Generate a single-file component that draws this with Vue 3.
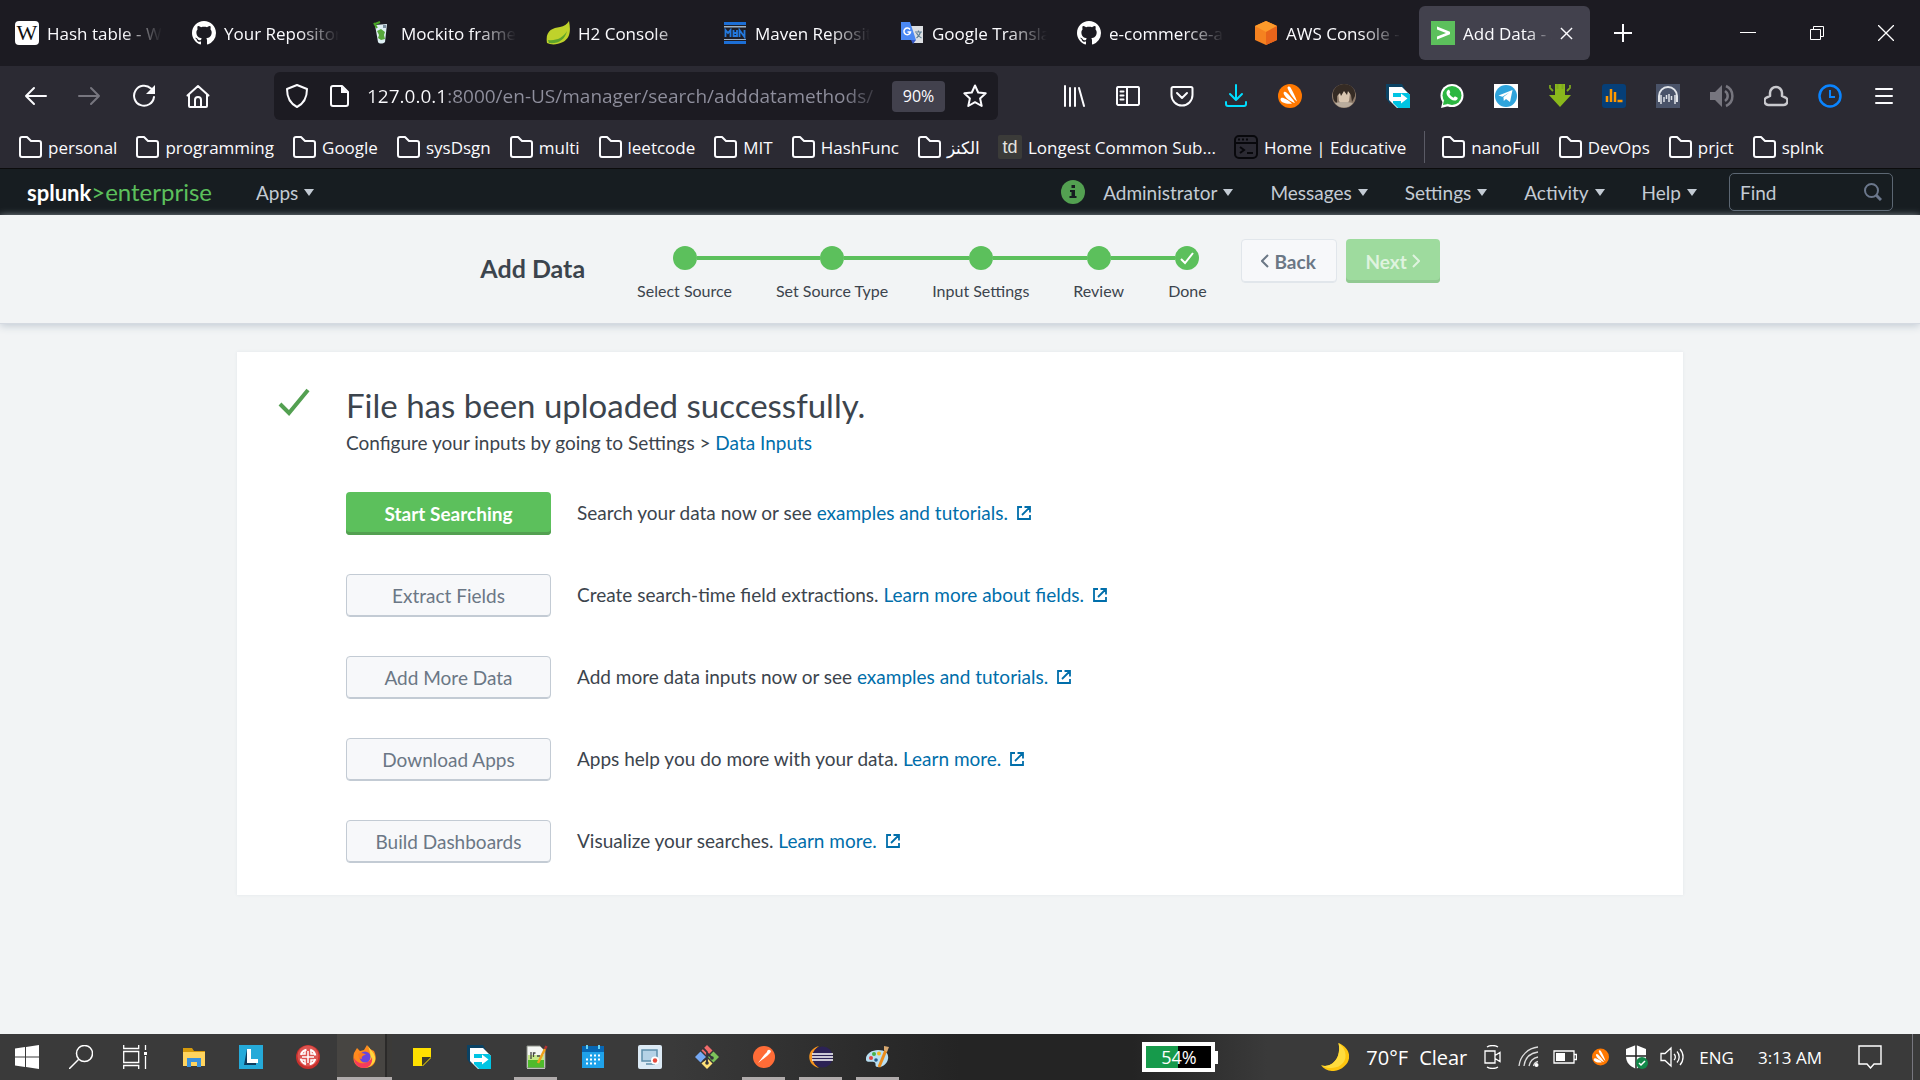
<script setup>
import { ref } from 'vue'

const github = '<path transform="scale(1.5)" fill="#fff" d="M8 0C3.58 0 0 3.58 0 8c0 3.54 2.29 6.53 5.47 7.59.4.07.55-.17.55-.38 0-.19-.01-.82-.01-1.49-2.01.37-2.53-.49-2.69-.94-.09-.23-.48-.94-.82-1.13-.28-.15-.68-.52-.01-.53.63-.01 1.08.58 1.23.82.72 1.21 1.87.87 2.33.66.07-.52.28-.87.51-1.07-1.78-.2-3.64-.89-3.64-3.95 0-.87.31-1.59.82-2.15-.08-.2-.36-1.02.08-2.12 0 0 .67-.21 2.2.82.64-.18 1.32-.27 2-.27s1.36.09 2 .27c1.53-1.04 2.2-.82 2.2-.82.44 1.1.16 1.92.08 2.12.51.56.82 1.27.82 2.15 0 3.07-1.87 3.75-3.65 3.95.29.25.54.73.54 1.48 0 1.07-.01 1.93-.01 2.2 0 .21.15.46.55.38A8.01 8.01 0 0016 8c0-4.42-3.58-8-8-8z"/>'
const line = (d, c = '#fbfbfe', w = 2) => `<path d="${d}" fill="none" stroke="${c}" stroke-width="${w}" stroke-linecap="round" stroke-linejoin="round"/>`
const avast = '<circle cx="12" cy="12" r="12" fill="#ff7800"/><path d="M9.500 4c0-1.500 2-2 3-.5 2 3.500 5 9 6.500 14-3-2-8-9-9.500-13.500z M5.500 9c.3-1.500 2-1.500 3-.5 3 3 6.500 6.500 8.500 10.500-4-1-11-6-11.500-10z M2.500 15c.5-1.500 2-1.500 3.500-.8 3 1.300 6 3 8 5.300-4 1-12-.5-11.500-4.500z" fill="#fff"/>'
const transfer = '<path d="M0 0h16l3 5H4v15L0 14z" fill="#0b4263"/><path d="M3 3h13l8 8v13H11l-8-8z" fill="#fff"/><path d="M7 9h15l2 2v13H12l-5-5z" fill="#00c4e3"/><path d="M7 13h8V9.500l6.500 5-6.500 5V17H7z" fill="#fff"/>'

const icons = {
  wiki: '<rect width="24" height="24" rx="4" fill="#fff"/><text x="12" y="19" text-anchor="middle" font-family="Liberation Serif, serif" font-size="22" fill="#111">W</text>',
  github,
  mockito: '<path d="M6 4l12-1-2 18c-2 2-6 2-7 0z" fill="#dff0f4"/><path d="M8 10l4-2 4 3-1 3 1 4-4 1-3-2 1-3z" fill="#57a83b"/><path d="M6 3l5-2M5 2l3 5" stroke="#49a527" stroke-width="2"/><path d="M14 4h3v3h-3z" fill="#7b8f9e"/>',
  leaf: '<path d="M23 0c2 10 1 17-6 21-6 3-12 3-16 1C-1 10 6 7 14 6c4-.5 7-3 9-6z" fill="#bfd22b"/><path d="M2 19c8 1 15-2 19-9-2 9-9 13-18 12z" fill="#5da32b"/>',
  maven: '<path d="M1 1h22v22H1z" fill="#1f1e26"/><path d="M1 1h22v3H1zM1 20h22v3H1z" fill="#1c6fd6"/><path d="M1 5h22v1.500H1zM1 18h22v1H1z" fill="#9fb2c4"/><path d="M2.500 16V9l2.500 3 2.500-3v7M10.500 9v6h3.500V9M10.500 12h4M16.500 16V9l5 7V9" fill="none" stroke="#2379dd" stroke-width="1.800"/>',
  translate: '<path d="M9 5h14v17H14z" fill="#dcdfe3"/><path d="M1 1h9l6 18H1z" fill="#4a88f3"/><path d="M11 19h5l-3 4z" fill="#3658c7"/><path d="M10 8.500A3.300 3.300 0 1 0 10.500 11H7.500" fill="none" stroke="#fff" stroke-width="1.500"/><path d="M15 11h7M18.500 9.500V11M20.500 11c-1 4-3 5-4 6M16.500 12c1 2 3 4 5 5" fill="none" stroke="#5c7f95" stroke-width="1.200"/>',
  aws: '<path d="M12 0l11 5v14l-11 5L1 19V5z" fill="#f58220"/><path d="M12 0l11 5-11 6L1 5z" fill="#fc9a2b"/><path d="M12 11l11-6v14l-11 5z" fill="#e8641b"/>',
  splunk: '<rect width="24" height="24" fill="#5cc05c"/><path d="M6 5.500l13 5.300v2.400L6 18.500v-3L15 12 6 8.500z" fill="#fff"/>',
  back: line('M22 12H2M10 4L2 12l8 8'),
  forward: line('M1 12h20M13 4l8 8-8 8', '#77767f'),
  reload: line('M22 13a10 10 0 1 1-3-8.500') + '<path d="M23 1v9h-9z" fill="#fbfbfe"/>',
  home: line('M1.500 11.500L12 2l10.500 9.500M3 10.500V22a1 1 0 0 0 1 1h16a1 1 0 0 0 1-1V10.500M9 22v-6a3 3 0 0 1 6 0v6'),
  shield: line('M12 1l10 4c0 10-4 15-10 18C6 20 2 15 2 5z'),
  page: line('M6 2h9l6 6v12a2 2 0 0 1-2 2H6a2 2 0 0 1-2-2V4a2 2 0 0 1 2-2z') + '<path d="M14 2v7h7z" fill="#fbfbfe"/>',
  star: line('M12 1.500l3.200 7 7.500.8-5.600 5.100 1.600 7.600-6.700-3.800L5.300 22l1.600-7.600L1.300 9.300l7.500-.8z'),
  library: line('M3 2v20M8 4v18M13 4v18M17 4l5 18'),
  sidebar: line('M2 3h20a1.500 1.500 0 0 1 1 1v16a1.500 1.500 0 0 1-1 1H2a1.500 1.500 0 0 1-1-1V4a1.500 1.500 0 0 1 1-1zM11 3v18M4.500 7.500h3M4.500 11.500h3M4.500 15.500h3'),
  pocket: line('M3 3h18a1.500 1.500 0 0 1 1.500 1.500V11a10.500 10.500 0 0 1-21 0V4.500A1.500 1.500 0 0 1 3 3zM7 9l5 5 5-5'),
  download: line('M12 1v15M6 10l6 6 6-6M2 18v2a2 2 0 0 0 2 2h16a2 2 0 0 0 2-2v-2', '#00ddff'),
  avast,
  avatar: '<circle cx="12" cy="12" r="12" fill="#8d7a6a"/><path d="M6 8c3-3 9-3 12 1l-1 8c-2 4-8 4-10 0z" fill="#d9c6b1"/><path d="M1 12C0 4 7 0 12 0c7 0 12 5 11 12l-3 6-1-7-3-4-1 4-3-4-3 5-1-3-3 3v7C3 18 1 16 1 12z" fill="#352b24"/><path d="M3 19c4 6 14 6 18 0l-6-1H9z" fill="#b9ac9d"/>',
  transfer,
  whatsapp: '<circle cx="12" cy="11.500" r="11.500" fill="#fff"/><path d="M1 24l2-8 6 6z" fill="#fff"/><circle cx="12" cy="11.500" r="9.500" fill="#2bb741"/><path d="M3 21l1-5 4 4z" fill="#2bb741"/><path d="M8 6c1-.5 1.500 0 2 1.500.6 1.300 0 1.500-.5 2.500 1 2 2.500 3 4 3.700 1-1.200 1.200-1.500 2-1.200l2.200 1.200c.3 2-1.700 3-3.500 2.800C10 16 6.500 11.500 6.500 9c0-1.500.7-2.500 1.500-3z" fill="#fff"/>',
  telegram: '<rect width="24" height="24" fill="#fff"/><circle cx="12" cy="12" r="11" fill="#2fa4dc"/><path d="M4.500 11.500L18.500 6l-2.500 12-4-3-2.200 2-.4-4 6-4.500-7 4.300z" fill="#fff"/>',
  arrow: '<path d="M7 0h10v11h6L12 23 1 11h6z" fill="#8ab81c"/><path d="M2 1v3l3 3M22 1v3l-3 3M9.500 0v5M14.500 0v5" fill="none" stroke="#7da620" stroke-width="1.800"/>',
  chart: '<rect width="24" height="24" rx="3" fill="#063f78"/><path d="M5 18V12M9 18V5M13 18V8M15.500 17h5" stroke="#ff9800" stroke-width="2.500"/>',
  headset: '<rect width="24" height="24" fill="#4a5369"/><path d="M3 18v-6a9 9 0 0 1 18 0v6" fill="none" stroke="#e2e5ea" stroke-width="2"/><path d="M5 11v9M8 13v5M10.500 11v4M13 10v8M15.500 12v4M19 11v9" stroke="#dfe2e8" stroke-width="1.500"/>',
  sound: '<path d="M0 8h5l7-7v22l-7-7H0z" fill="#77767f"/><path d="M15 7a6 6 0 0 1 0 10M16 2a11 11 0 0 1 0 20" fill="none" stroke="#77767f" stroke-width="2.500"/>',
  drive: line('M5 21h14a4 4 0 0 0 1-8l-2-1V9a6 6 0 0 0-12 0v3l-2 1a4 4 0 0 0 1 8z', '#c9c9ce', 2.5),
  clock: '<circle cx="12" cy="12" r="10.500" fill="none" stroke="#0a84ff" stroke-width="2.500"/><path d="M12 6v7h5" fill="none" stroke="#0a84ff" stroke-width="2"/>',
  menu: line('M4 5h16M4 12h16M4 19h16'),
  folder: line('M2 20V4a2 2 0 0 1 2-2h5l4 4h8a2 2 0 0 1 2 2v12a2 2 0 0 1-2 2H4a2 2 0 0 1-2-2z'),
  td: '<rect width="24" height="24" rx="2" fill="#3b3b39"/><text x="12" y="18" text-anchor="middle" font-family="Liberation Sans, sans-serif" font-size="18" fill="#e4e4e0">td</text>',
  terminal: '<rect x="1" y="1" width="22" height="22" rx="4" fill="none" stroke="#08080c" stroke-width="2"/><path d="M1 8h22M4 4.500h2M8 4.500h2M12 4.500h2M6 12l4 3-4 3M13 18h6" stroke="#08080c" stroke-width="2" fill="none"/>',
  explorer: '<path d="M1 3h9l2 3h11v15H1z" fill="#d69a0c"/><path d="M1 7h22v14H1z" fill="#ffd45e"/><path d="M5 13h14v9h-4v-5H9v5H5z" fill="#3a91dc"/>',
  letter: '<rect width="24" height="24" fill="#25aad9"/><path d="M8 4L5 20h12V15h-5z" fill="#0d3c5e"/><path d="M8 4h4v10h7v4H8z" fill="#fff"/>',
  redball: '<circle cx="12" cy="12" r="12" fill="#c9302c"/><circle cx="12" cy="11" r="10.500" fill="#dd5450"/><circle cx="12" cy="12" r="7.500" fill="none" stroke="#fff" stroke-width="2" stroke-dasharray="8 3.780" stroke-dashoffset="-2"/><path d="M12 6v12M6 12h12M9 6v3H6M15 6v3h3M9 18v-3H6M15 18v-3h3" fill="none" stroke="#fff" stroke-width="1.500"/>',
  firefox: '<path d="M1 8l3-5 3 3 4-1 3-5 3 4 4 2c4 8 1 17-9 17S-1 16 1 8z" fill="#ff8a1d"/><path d="M15 1l3 4c3 3 5 7 4 11-3 5-6 6-9 6 6-6 5-13 2-21z" fill="#ffd53d"/><path d="M1 13c2 4 6 6 11 5 4-1 6-3 7-6 1 7-3 11-8 11-6 0-10-4-10-10z" fill="#f53b5c"/><circle cx="12" cy="12" r="5.500" fill="#6a45dd"/><path d="M5 9c3-2 6-1 8 1-3 0-5 2-4 4-2 0-4-2-4-5z" fill="#ff7a1f"/>',
  sticky: '<path d="M3 3h18v10l-8 8H3z" fill="#ffe000"/><path d="M12 21v-9h9z" fill="#3a3a2c"/>',
  notepad: '<path d="M3 1h13l5 5v18H3z" fill="#f4f6f3"/><path d="M4 10h16v6H4z" fill="#c5e989"/><path d="M4 15h16v8H4z" fill="#4fbb2b"/><path d="M3 1h13l5 5v17H3z" fill="none" stroke="#8a8f86"/><path d="M7 14V7M9.500 12V8h2M13 11h3" fill="none" stroke="#444" stroke-width="1.300"/><path d="M21 4l-7 14" stroke="#f0a11c" stroke-width="2.500"/><path d="M22.500 1l-1.500 3" stroke="#b23232" stroke-width="2.500"/>',
  calendar: '<rect x="1" y="1" width="22" height="22" fill="#1fa2ea"/><path d="M1 1h22v6H1z" fill="#0767b4"/><path d="M6 0v4M18 0v4" stroke="#66d1f3" stroke-width="2"/><path d="M9 10.500h11M5 14.500h15M5 18.500h11" stroke="#fff" stroke-width="2" stroke-dasharray="2 2"/>',
  recorder: '<rect width="24" height="24" rx="2" fill="#dceaf5"/><path d="M4 5h15v11H4zM8 19h9" fill="#b5d2e6" stroke="#5e8fab" stroke-width="1.500"/><circle cx="17" cy="15.500" r="4" fill="#fff"/><circle cx="17" cy="15.500" r="2.200" fill="#e64b3c"/>',
  git: '<path d="M12 0l5.500 5.500L12 11 6.500 5.500z" fill="#f16b6b"/><path d="M18.500 6.500L24 12l-5.500 5.500L13 12z" fill="#7cc35a"/><path d="M12 13l5.500 5.500L12 24l-5.500-5.500z" fill="#ffe278"/><path d="M5.500 6.500L11 12l-5.500 5.500L0 12z" fill="#75a8f3"/><path d="M8 3l4 4v11M12 8l5 5M12 13l-4 3" stroke="#33333b" stroke-width="1.800" fill="none"/><circle cx="12" cy="18" r="1.800" fill="#33333b"/><circle cx="17" cy="13" r="1.800" fill="#33333b"/>',
  postman: '<circle cx="12" cy="12" r="11" fill="#ff6c37"/><path d="M6 18l7-9 2 2zM13 9l3-3 2 2-3 3z" fill="#fff"/><circle cx="17" cy="6.500" r="1.800" fill="#fff"/>',
  eclipse: '<path d="M10 1C-3 4-3 20 10 23 2 18 2 6 10 1z" fill="#f7941e"/><circle cx="13.500" cy="12" r="10.500" fill="#2c2255"/><path d="M3 9h21M3 12h21M3 15h21" stroke="#fff" stroke-width="1.500"/>',
  paint: '<path d="M12 5c8 0 11 4 10 9s-6 9-11 8c-3-1 0-4-3-5s-7 1-8-2C-1 10 5 5 12 5z" fill="#b9dff2"/><circle cx="5" cy="13" r="2" fill="#e04545"/><circle cx="8" cy="9" r="2" fill="#47b04b"/><circle cx="13" cy="8.500" r="2" fill="#f4b91f"/><circle cx="10" cy="15" r="1.800" fill="#225c8c"/><path d="M20 5l-7 17" stroke="#ea8c1c" stroke-width="3"/><path d="M18 1l5 1-2 5-3-2z" fill="#d8a870"/>',
  windows: '<path d="M0 3.400L10 2v9.500H0zM11 1.900L24 0v11.500H11zM0 12.500h10V22L0 20.600zM11 12.500h13V24l-13-1.900z" fill="#fff"/>',
  search: '<circle cx="15.500" cy="8.500" r="8" fill="none" stroke="#fff" stroke-width="1.500"/><path d="M9.500 14.500L0 24" stroke="#fff" stroke-width="1.500"/>',
  taskview: '<path d="M.7 0v3.500h15V0M.7 24v-3.500h15V24M.7 6.500h15v11H.7zM22.500 0v5M22.500 11v13" fill="none" stroke="#fff" stroke-width="1.300"/><path d="M21 7h3v3h-3z" fill="#fff"/>',
  meet: '<path d="M4 6h10v12H4zM14 10.500l5-3v9l-5-3M6 2c3-2 8-2 11 0M6 22c3 2 8 2 11 0" fill="none" stroke="#fff" stroke-width="1.300"/>',
  wifi: '<path d="M2 21C3 11 11 3 21 2M7 21C8 13 13 8 21 7M12 21c1-5 4-8 9-9M16.500 21c.5-2.500 2-4 4.500-4.500" fill="none" stroke="#ddd" stroke-width="1.300"/><circle cx="19.500" cy="20" r="2" fill="#fff"/>',
  battery: '<path d="M1 6h20v12H1zM21 9.500h2.500v5H21" fill="none" stroke="#fff" stroke-width="1.300"/><path d="M3 8h9v8H3z" fill="#fff"/>',
  defender: '<path d="M12 0l10 4v7c0 7-4 10-10 13C6 21 2 18 2 11V4z" fill="#fff"/><path d="M12 0v24M2 11h20" stroke="#222" stroke-width="1.500"/><circle cx="18" cy="18" r="6" fill="#12894a"/><path d="M15 18l2 2 4-4" fill="none" stroke="#fff" stroke-width="1.500"/>',
  volume: '<path d="M1 8.500h4l6-5.500v18l-6-5.500H1zM14 9a4 4 0 0 1 0 6M17 6.500a8 8 0 0 1 0 11M20 4a12 12 0 0 1 0 16" fill="none" stroke="#fff" stroke-width="1.300"/>',
  notice: '<path d="M1 1h22v18h-7l-3.500 4L9 19H1z" fill="none" stroke="#fff" stroke-width="1.400"/>',
  moon: '<path d="M15 0c10 4 12 14 5 20-6 6-16 5-20-1 8 3 18-5 15-19z" fill="#fdc50f"/><path d="M15 0c6 4 8 12 4 17-4 5-12 6-19 2 8 3 18-5 15-19z" fill="#ffdc3e"/>',
}

const tabs = [
  ['wiki', 'Hash table - Wikipedia'], ['github', 'Your Repositories'], ['mockito', 'Mockito framework'],
  ['leaf', 'H2 Console'], ['maven', 'Maven Repository'], ['translate', 'Google Translate'],
  ['github', 'e-commerce-app'], ['aws', 'AWS Console - Signup'], ['splunk', 'Add Data - Splunk'],
]
const extensions = ['library', 'sidebar', 'pocket', 'download', 'avast', 'avatar', 'transfer', 'whatsapp', 'telegram', 'arrow', 'chart', 'headset', 'sound', 'drive', 'clock', 'menu']
const bookmarks = [
  ['folder', 'personal'], ['folder', 'programming'], ['folder', 'Google'], ['folder', 'sysDsgn'], ['folder', 'multi'],
  ['folder', 'leetcode'], ['folder', 'MIT'], ['folder', 'HashFunc'], ['folder', 'الكنز'],
  ['td', 'Longest Common Sub...'], ['terminal', 'Home | Educative'],
]
const moreBookmarks = ['nanoFull', 'DevOps', 'prjct', 'splnk']
const menus = ['Administrator', 'Messages', 'Settings', 'Activity', 'Help']
const steps = ['Select Source', 'Set Source Type', 'Input Settings', 'Review', 'Done']
const actions = [
  ['Start Searching', 'Search your data now or see', 'examples and tutorials.'],
  ['Extract Fields', 'Create search-time field extractions.', 'Learn more about fields.'],
  ['Add More Data', 'Add more data inputs now or see', 'examples and tutorials.'],
  ['Download Apps', 'Apps help you do more with your data.', 'Learn more.'],
  ['Build Dashboards', 'Visualize your searches.', 'Learn more.'],
]
const apps = [
  ['explorer', ''], ['letter', ''], ['redball', ''], ['firefox', 'current'], ['sticky', ''], ['transfer', ''], ['notepad', 'open'],
  ['calendar', ''], ['recorder', ''], ['git', ''], ['postman', 'open'], ['eclipse', 'open'], ['paint', 'open'],
]
const tray = ['meet', 'wifi', 'battery', 'avast', 'defender', 'volume']
const url = ref('127.0.0.1:8000/en-US/manager/search/adddatamethods/')
const find = ref('')
</script>

<template>
  <div class="screen">
    <header class="browser">
      <div class="tabstrip">
        <div v-for="([icon, title], i) in tabs" :key="title" class="tab" :class="{ active: i === 8 }">
          <svg class="icon" viewBox="0 0 24 24" v-html="icons[icon]" />
          <span class="tab-title">{{ title }}</span>
          <button v-if="i === 8" class="tab-close" aria-label="Close tab">
            <svg viewBox="0 0 14 14"><path d="M1 1l12 12M13 1L1 13" stroke="#fbfbfe" stroke-width="1.500" /></svg>
          </button>
        </div>
        <button class="new-tab" aria-label="New tab">
          <svg viewBox="0 0 18 18"><path d="M9 0v18M0 9h18" stroke="#fbfbfe" stroke-width="2" /></svg>
        </button>
        <div class="window-controls">
          <button aria-label="Minimize"><svg viewBox="0 0 16 16"><path d="M0 7.500h16" stroke="#fff" /></svg></button>
          <button aria-label="Restore"><svg viewBox="0 0 16 16"><path d="M1.500 4.500h10v10h-10zM4.500 4.500v-3h10v10h-3" fill="none" stroke="#fff" /></svg></button>
          <button aria-label="Close"><svg viewBox="0 0 16 16"><path d="M0 0l16 16M16 0L0 16" stroke="#fff" stroke-width="1.300" /></svg></button>
        </div>
      </div>

      <div class="toolbar">
        <button v-for="name in ['back', 'forward', 'reload', 'home']" :key="name" class="tool" :aria-label="name">
          <svg class="icon" viewBox="0 0 24 24" v-html="icons[name]" />
        </button>
        <div class="urlbar">
          <svg class="icon" viewBox="0 0 24 24" v-html="icons.shield" />
          <svg class="icon" viewBox="0 0 24 24" v-html="icons.page" />
          <input v-model="url" class="url" aria-label="Address" />
          <button class="zoom">90%</button>
          <svg class="icon" viewBox="0 0 24 24" v-html="icons.star" />
        </div>
        <button v-for="name in extensions" :key="name" class="tool" :aria-label="name">
          <svg class="icon" viewBox="0 0 24 24" v-html="icons[name]" />
        </button>
      </div>

      <nav class="bookmarks">
        <a v-for="[icon, label] in bookmarks" :key="label" href="#" :class="icon">
          <svg class="icon" viewBox="0 0 24 24" v-html="icons[icon]" />{{ label }}
        </a>
        <i class="divider" />
        <a v-for="label in moreBookmarks" :key="label" href="#" class="folder">
          <svg class="icon" viewBox="0 0 24 24" v-html="icons.folder" />{{ label }}
        </a>
      </nav>
    </header>

    <nav class="splunkbar">
      <a class="logo" href="#"><b>splunk</b><span>&gt;enterprise</span></a>
      <button class="menu">Apps<i class="caret" /></button>
      <svg class="info" viewBox="0 0 24 24"><circle cx="12" cy="12" r="12" fill="#53a051" /><path d="M10.500 5h3.500v3h-3.500zM9 10h5v6h1.500v2H8.500v-2H10.500v-4H9z" fill="#171d21" /></svg>
      <button v-for="name in menus" :key="name" class="menu">{{ name }}<i class="caret" /></button>
      <label class="find">
        <input v-model="find" placeholder="Find" aria-label="Find" />
        <svg viewBox="0 0 18 18"><circle cx="7.500" cy="7.500" r="6.500" fill="none" stroke="#6b778c" stroke-width="2" /><path d="M12 12l5 5" stroke="#6b778c" stroke-width="3" /></svg>
      </label>
    </nav>

    <section class="wizard">
      <h1>Add Data</h1>
      <ol class="steps">
        <li v-for="(step, i) in steps" :key="step">
          <div class="track">
            <i class="bar" :class="{ hidden: i === 0 }" />
            <span class="dot"><svg v-if="i === 4" viewBox="0 0 14 14"><path d="M1 8l4 4 8-10" fill="none" stroke="#fff" stroke-width="2" /></svg></span>
            <i class="bar" :class="{ hidden: i === 4 }" />
          </div>
          <span class="step-label">{{ step }}</span>
        </li>
      </ol>
      <div class="wizard-buttons">
        <button class="back"><svg viewBox="0 0 8 14"><path d="M7 1L1 7l6 6" fill="none" stroke="currentColor" stroke-width="2" /></svg>Back</button>
        <button class="next" disabled>Next<svg viewBox="0 0 8 14"><path d="M1 1l6 6-6 6" fill="none" stroke="currentColor" stroke-width="2" /></svg></button>
      </div>
    </section>

    <main class="content">
      <div class="card">
        <svg class="check" viewBox="0 0 32 28"><path d="M2 16l9 9L30 2" fill="none" stroke="#53a051" stroke-width="4" /></svg>
        <div class="card-body">
          <h2>File has been uploaded successfully.</h2>
          <p class="hint">Configure your inputs by going to Settings &gt; <a href="#">Data Inputs</a></p>
          <div v-for="([label, text, link], i) in actions" :key="label" class="action">
            <button :class="{ primary: i === 0 }">{{ label }}</button>
            <p>
              {{ text }} <a href="#">{{ link }}<svg class="external" viewBox="0 0 14 14"><path d="M5 1H1v12h12V9M7.500 1H13v5.500M13 1L5 9" fill="none" stroke="#006eaa" stroke-width="1.800" /></svg></a>
            </p>
          </div>
        </div>
      </div>
    </main>

    <footer class="taskbar">
      <button v-for="name in ['windows', 'search', 'taskview']" :key="name" class="system" :aria-label="name">
        <svg class="icon" viewBox="0 0 24 24" v-html="icons[name]" />
      </button>
      <div class="apps">
        <button v-for="[name, state] in apps" :key="name" class="app" :class="state" :aria-label="name">
          <svg class="icon" viewBox="0 0 24 24" v-html="icons[name]" />
        </button>
      </div>
      <div class="charge">54%</div>
      <div class="weather"><svg viewBox="0 0 24 24" v-html="icons.moon" /><span>70°F</span><span>Clear</span></div>
      <div class="tray">
        <svg v-for="name in tray" :key="name" :class="name" viewBox="0 0 24 24" v-html="icons[name]" />
      </div>
      <span class="lang">ENG</span>
      <time>3:13 AM</time>
      <button class="notice" aria-label="Notifications"><svg class="icon" viewBox="0 0 24 24" v-html="icons.notice" /></button>
    </footer>
  </div>
</template>

<style>
body { margin: 0; }
</style>

<style scoped>
* { box-sizing: border-box; }
button { padding: 0; border: 0; background: none; font: inherit; color: inherit; }
svg { display: block; flex: none; }
.icon { width: 24px; height: 24px; }
.screen { display: flex; flex-direction: column; min-height: 100vh; background: #f2f4f5; font-family: Lato, sans-serif; font-size: 19px; color: #3c444d; }

.browser { background: #2b2a33; border-bottom: 1px solid #0c0c0d; font-family: "Open Sans", sans-serif; font-size: 17px; color: #fbfbfe; }
.tabstrip { display: flex; align-items: center; gap: 6px; height: 66px; padding-left: 3px; background: #1c1b22; }
.tab { display: flex; align-items: center; gap: 8px; flex: 0 1 171px; min-width: 0; height: 54px; padding: 0 12px; border-radius: 6px; }
.tab.active { background: #42414d; }
.tab-title { flex: 1; overflow: hidden; white-space: nowrap; mask-image: linear-gradient(to left, transparent, #000 40px); }
.active .tab-title { mask-image: linear-gradient(to left, transparent, #000 24px); }
.tab-close { padding: 5px 5px 5px 0; }
.tab-close svg { width: 13px; height: 13px; }
.new-tab { padding: 14px 18px; }
.new-tab svg { width: 18px; height: 18px; }
.window-controls { display: flex; margin-left: auto; }
.window-controls button { display: grid; place-items: center; width: 69px; height: 44px; }
.window-controls svg { width: 16px; height: 16px; }
.toolbar { display: flex; align-items: center; height: 60px; padding: 0 9px; }
.tool { display: grid; place-items: center; width: 54px; height: 48px; }
.urlbar { display: flex; align-items: center; flex: 1; min-width: 0; height: 48px; margin: 0 49px; padding: 0 11px; border-radius: 6px; background: #1c1b22; }
.urlbar .icon + .icon { margin-left: 18px; }
.url { flex: 1; min-width: 0; height: 40px; margin: 0 8px 0 16px; padding: 0; border: 0; outline: 0; font: inherit; font-size: 19px; color: transparent; background: linear-gradient(to right, #fbfbfe 79px, #8f8f9d 79px); background-clip: text; mask-image: linear-gradient(to left, transparent, #000 40px); }
.zoom { width: 53px; height: 31px; margin-right: 18px; border-radius: 4px; background: #42414d; font-size: 16px; }
.bookmarks { display: flex; align-items: center; gap: 18px; height: 42px; padding: 0 18px; white-space: nowrap; }
.bookmarks a { display: flex; align-items: center; gap: 6px; color: inherit; text-decoration: none; }
.divider { width: 1px; height: 32px; margin-right: -2px; background: #5b5b66; }

.splunkbar { display: flex; align-items: center; height: 46px; padding: 0 27px; background: #171d21; color: #c3cbd4; }
.logo { display: flex; align-items: baseline; margin-right: 44px; font-size: 24px; line-height: 28px; color: #5cc05c; text-decoration: none; }
.logo b { font-size: 22px; color: #fff; }
.menu { display: flex; align-items: center; gap: 6px; margin-right: 37px; }
.caret { border: 5px solid transparent; border-top: 7px solid #c3cbd4; border-bottom: 0; }
.info { width: 24px; height: 24px; margin: 0 18px 0 auto; }
.find { display: flex; align-items: center; width: 164px; height: 38px; margin-left: -5px; padding: 0 10px; border: 1px solid #5c6773; border-radius: 5px; }
.find input { flex: 1; min-width: 0; padding: 0; border: 0; outline: 0; background: none; font: inherit; color: #c3cbd4; }
.find input::placeholder { color: #c3cbd4; }
.find svg { width: 18px; height: 18px; }

.wizard { display: flex; justify-content: center; height: 109px; border-bottom: 1px solid #d5dae1; box-shadow: 0 2px 8px #c3cbd4; }
h1 { margin: 36px 30px 0 0; font-size: 25px; line-height: 34px; font-weight: 700; }
.steps { display: flex; margin: 31px 12px 0 0; padding: 0; list-style: none; font-size: 16px; line-height: 20px; text-align: center; }
.steps li { display: flex; flex-direction: column; }
.step-label { padding: 0 22px; white-space: nowrap; }
.track { display: flex; align-items: center; margin-bottom: 11px; }
.bar { flex: 1; height: 4px; background: #5cc05c; }
.bar.hidden { visibility: hidden; }
.dot { display: grid; place-items: center; width: 24px; height: 24px; border-radius: 50%; background: #5cc05c; }
.dot svg { width: 14px; height: 14px; }
.wizard-buttons { display: flex; gap: 9px; padding-top: 24px; font-weight: 700; }
.wizard-buttons button { display: flex; align-items: center; justify-content: center; gap: 5px; height: 44px; border-radius: 4px; }
.wizard-buttons svg { width: 8px; height: 14px; }
.back { width: 96px; border: 1px solid #e1e6eb; background: #f7f8fa; box-shadow: inset 0 -1px #e1e6eb; color: #6b7785; }
.next { width: 94px; background: #9edb9e; box-shadow: inset 0 -3px #92c992; color: #dff3df; }

.content { flex: 1; padding: 28px 237px 40px; }
.card { display: flex; gap: 36px; padding: 34px 41px 32px; background: #fff; box-shadow: 0 0 3px #e1e6eb; }
.check { width: 32px; height: 28px; margin-top: 2px; }
h2 { margin: 0; font-size: 33px; line-height: 38px; font-weight: 400; }
.hint { margin: 7px 0 37px; line-height: 24px; }
a { color: #006eaa; text-decoration: none; }
.action { display: flex; align-items: flex-start; gap: 26px; margin-bottom: 39px; }
.action:last-child { margin-bottom: 0; }
.action button { width: 205px; height: 43px; border: 1px solid #c3cbd4; border-radius: 4px; background: #f7f8fa; box-shadow: inset 0 -1px #c3cbd4; color: #6b7785; }
.action .primary { border: 0; background: #5cc05c; box-shadow: inset 0 -3px #53a051; font-weight: 700; color: #fff; }
.action p { margin: 0; padding-top: 9px; line-height: 24px; }
.external { display: inline-block; width: 14px; height: 14px; margin-left: 9px; }

.taskbar { display: flex; align-items: center; height: 46px; background: linear-gradient(to right, #3a3a3a 35%, #242424 50%, #242424 59%, #3a3a3a 66%); font-family: "Open Sans", sans-serif; font-size: 17px; color: #fff; }
.system { display: grid; place-items: center; width: 54px; height: 46px; }
.apps { display: flex; flex: 1; padding-left: 3px; }
.app { display: grid; place-items: center; width: 43px; height: 46px; margin: 0 7px; }
.open { box-shadow: inset 0 -3px #b0abab; }
.current { width: 55px; margin: 0 1px; background: linear-gradient(to right, #474542 48px, #2b2a29 48px, #2b2a29 50px, #3b3a38 50px); box-shadow: inset 0 -3px #b0abab; }
.charge { position: relative; width: 73px; height: 30px; margin-right: 106px; border: 4px solid #fff; background: linear-gradient(to right, #169a4b 50%, #000 50%); text-align: center; line-height: 22px; font-size: 18px; }
.charge::after { content: ""; position: absolute; top: 5px; right: -7px; width: 3px; height: 13px; background: #fff; }
.weather { display: flex; align-items: center; gap: 11px; margin-right: 14px; font-size: 20px; }
.weather svg { width: 28px; height: 28px; margin-right: 6px; }
.tray { display: flex; align-items: center; gap: 12px; margin-right: 15px; }
.tray svg { width: 24px; height: 24px; }
.tray .avast { width: 17px; margin: 0 3px; }
time { margin: 0 36px 0 24px; }
.notice { display: flex; align-items: center; height: 46px; margin-right: 7px; padding-right: 30px; border-right: 1px solid #77767f; }
</style>
